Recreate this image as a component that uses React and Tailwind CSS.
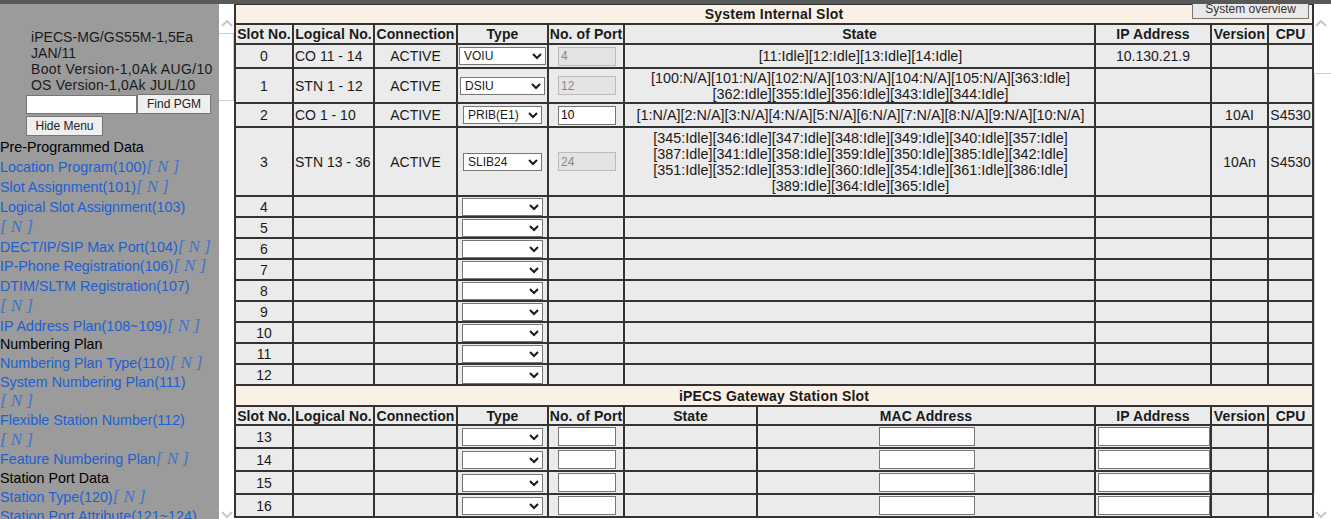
import React from 'react';

const cell = 'border-2 border-[#333] bg-[#ebebeb] p-0 text-center align-middle';
const head = 'border-2 border-[#333] bg-[#ebebeb] p-0 text-center font-bold whitespace-nowrap tracking-[0.1px]';
const titleCell = 'border-2 border-[#333] bg-[#faf0e6] p-0 text-center font-bold tracking-[0.2px]';

const menu = [
  { group: 'Pre-Programmed Data', top: true },
  { label: 'Location Program(100)', top: true },
  { label: 'Slot Assignment(101)', top: true },
  { label: 'Logical Slot Assignment(103)', top: true },
  { label: 'DECT/IP/SIP Max Port(104)', top: true },
  { label: 'IP-Phone Registration(106)', top: true },
  { label: 'DTIM/SLTM Registration(107)', top: true },
  { label: 'IP Address Plan(108~109)', top: true },
  { group: 'Numbering Plan', pull: true },
  { label: 'Numbering Plan Type(110)' },
  { label: 'System Numbering Plan(111)' },
  { label: 'Flexible Station Number(112)' },
  { label: 'Feature Numbering Plan' },
  { group: 'Station Port Data' },
  { label: 'Station Type(120)' },
  { label: 'Station Port Attribute(121~124)' },
];

const slots = [
  { no: 0, h: 'h-[24px]', logical: 'CO 11 - 14', conn: 'ACTIVE', type: 'VOIU', selW: 'w-[87px]', port: '4', off: true, state: ['[11:Idle][12:Idle][13:Idle][14:Idle]'], ip: '10.130.21.9' },
  { no: 1, h: 'h-[35px]', logical: 'STN 1 - 12', conn: 'ACTIVE', type: 'DSIU', selW: 'w-[85px]', port: '12', off: true, state: ['[100:N/A][101:N/A][102:N/A][103:N/A][104:N/A][105:N/A][363:Idle]', '[362:Idle][355:Idle][356:Idle][343:Idle][344:Idle]'] },
  { no: 2, h: 'h-[24px]', logical: 'CO 1 - 10', conn: 'ACTIVE', type: 'PRIB(E1)', selW: 'w-[79px]', port: '10', state: ['[1:N/A][2:N/A][3:N/A][4:N/A][5:N/A][6:N/A][7:N/A][8:N/A][9:N/A][10:N/A]'], version: '10AI', cpu: 'S4530' },
  { no: 3, h: 'h-[69px]', logical: 'STN 13 - 36', conn: 'ACTIVE', type: 'SLIB24', selW: 'w-[79px]', port: '24', off: true, state: ['[345:Idle][346:Idle][347:Idle][348:Idle][349:Idle][340:Idle][357:Idle]', '[387:Idle][341:Idle][358:Idle][359:Idle][350:Idle][385:Idle][342:Idle]', '[351:Idle][352:Idle][353:Idle][360:Idle][354:Idle][361:Idle][386:Idle]', '[389:Idle][364:Idle][365:Idle]'], version: '10An', cpu: 'S4530' },
];

const emptySlots = [4, 5, 6, 7, 8, 9, 10, 11, 12];
const gatewaySlots = [13, 14, 15, 16];

function TypeSelect({ value = '', width = 'w-[81px]' }) {
  return (
    <select
      defaultValue={value}
      className={`${width} h-[18px] border border-[#767676] bg-white text-[12px] align-middle appearance-auto`}
    >
      <option value="">{''}</option>
      {value && <option value={value}>{value}</option>}
    </select>
  );
}

function PortInput({ value = '', off = false }) {
  return (
    <input
      type="text"
      defaultValue={value}
      disabled={off}
      className={`ml-[2px] w-[58px] h-[19px] border px-[2px] text-[12px] align-middle ${off ? 'border-[#bbb] bg-[#e4e4e4] text-[#888]' : 'border-[#767676] bg-white text-black'}`}
    />
  );
}

function Scrollbar({ width, thumb, arrowPad = '' }) {
  return (
    <div className={`flex h-full ${width} shrink-0 flex-col bg-white`}>
      <div className={`mt-[15px] flex shrink-0 justify-center ${arrowPad}`}>
        <svg width="12" height="8" viewBox="0 0 12 8" fill="none">
          <path d="M1 7 L6 2 L11 7" stroke="#c8c8c8" strokeWidth="2" />
        </svg>
      </div>
      <div className={`${thumb} w-full shrink-0 border-[#cfcfcf]`} />
      <div className={`mt-auto flex shrink-0 justify-center ${arrowPad}`}>
        <svg width="12" height="8" viewBox="0 0 12 8" fill="none">
          <path d="M1 1 L6 6 L11 1" stroke="#c8c8c8" strokeWidth="2" />
        </svg>
      </div>
    </div>
  );
}

function SideMenu() {
  return (
    <aside className="h-full w-[219px] shrink-0 overflow-hidden bg-[#9b9b9b] text-[14px]">
      <div className="pl-[31px] pt-[25px] leading-[16px] text-[#1a1a1a]">
        <div className="w-[185px] tracking-[0.05px]">iPECS-MG/GS55M-1,5Ea JAN/11</div>
        <div className="whitespace-nowrap tracking-[0.36px]">Boot Version-1,0Ak AUG/10</div>
        <div className="whitespace-nowrap tracking-[0.22px]">OS Version-1,0Ak JUL/10</div>
      </div>
      <div className="flex items-center pl-[26px] pt-[1px]">
        <input type="text" className="h-[19px] w-[111px] border border-[#767676] bg-white" />
        <button className="h-[20px] w-[74px] border border-[#767676] bg-[#efefef] text-[12px] text-[#222]">Find PGM</button>
      </div>
      <div className="pl-[26px] pt-[1px]">
        <button className="h-[20px] w-[77px] border border-[#767676] bg-[#efefef] text-[12px] text-[#222]">Hide Menu</button>
      </div>
      <div className="w-[212px] pt-[2px] text-[14.3px]">
        {menu.map((m) =>
          m.group ? (
            <div key={m.group} className={`text-black ${m.top ? 'leading-[19.9px]' : 'leading-[19.1px]'} ${m.pull ? '-mt-[2px]' : ''}`}>{m.group}</div>
          ) : (
            <div key={m.label} className={`text-[#1b60d4] ${m.top ? 'leading-[19.9px]' : 'leading-[19.1px]'}`}>
              {m.label}
              <span className="inline-block font-['Liberation_Serif'] text-[17px] italic leading-[17px] font-light text-[#3f74cc]">[ N ]</span>
            </div>
          ),
        )}
      </div>
    </aside>
  );
}

function Cols() {
  return (
    <colgroup>
      {[58, 81, 83, 91, 76, 133, 338, 116, 57, 45].map((w, i) => (
        <col key={i} style={{ width: w }} />
      ))}
    </colgroup>
  );
}

function SlotTable() {
  return (
    <table className="w-[1080px] table-fixed border-collapse bg-[#ebebeb] text-[14px] leading-[16px] text-[#1a1a1a]">
      <Cols />
      <tbody>
        <tr className="h-[20px]">
          <td colSpan={10} className={titleCell}>System Internal Slot</td>
        </tr>
        <tr className="h-[20px]">
          <td className={head}>Slot No.</td>
          <td className={head}>Logical No.</td>
          <td className={head}>Connection</td>
          <td className={head}>Type</td>
          <td className={head}>No. of Port</td>
          <td colSpan={2} className={head}>State</td>
          <td className={head}>IP Address</td>
          <td className={head}>Version</td>
          <td className={head}>CPU</td>
        </tr>
        {slots.map((s) => (
          <tr key={s.no} className={s.h}>
            <td className={cell}>{s.no}</td>
            <td className={`${cell} text-left pl-[1px]`}>{s.logical}</td>
            <td className={cell}>{s.conn}</td>
            <td className={cell}><TypeSelect value={s.type} width={s.selW} /></td>
            <td className={cell}><PortInput value={s.port} off={s.off} /></td>
            <td colSpan={2} className={`${cell} pl-[2px] text-[14.4px]`}>
              {s.state.map((line) => <div key={line}>{line}</div>)}
            </td>
            <td className={cell}>{s.ip}</td>
            <td className={cell}>{s.version}</td>
            <td className={cell}>{s.cpu}</td>
          </tr>
        ))}
        {emptySlots.map((n) => (
          <tr key={n} className="h-[21px]">
            <td className={cell}>{n}</td>
            <td className={cell} />
            <td className={cell} />
            <td className={cell}><TypeSelect /></td>
            <td className={cell} />
            <td colSpan={2} className={cell} />
            <td className={cell} />
            <td className={cell} />
            <td className={cell} />
          </tr>
        ))}
        <tr className="h-[21px]">
          <td colSpan={10} className={titleCell}>iPECS Gateway Station Slot</td>
        </tr>
        <tr className="h-[19px]">
          <td className={head}>Slot No.</td>
          <td className={head}>Logical No.</td>
          <td className={head}>Connection</td>
          <td className={head}>Type</td>
          <td className={head}>No. of Port</td>
          <td className={head}>State</td>
          <td className={head}>MAC Address</td>
          <td className={head}>IP Address</td>
          <td className={head}>Version</td>
          <td className={head}>CPU</td>
        </tr>
        {gatewaySlots.map((n) => (
          <tr key={n} className="h-[23px]">
            <td className={cell}>{n}</td>
            <td className={cell} />
            <td className={cell} />
            <td className={cell}><TypeSelect /></td>
            <td className={cell}><PortInput /></td>
            <td className={cell} />
            <td className={cell}>
              <input type="text" className="ml-[2px] h-[19px] w-[96px] border border-[#767676] bg-white align-middle" />
            </td>
            <td className={cell}>
              <input type="text" className="ml-[2px] h-[19px] w-[112px] border border-[#767676] bg-white align-middle" />
            </td>
            <td className={cell} />
            <td className={cell} />
          </tr>
        ))}
      </tbody>
    </table>
  );
}

export default function App() {
  return (
    <div className="flex h-[519px] w-[1331px] flex-col overflow-hidden bg-white font-['Liberation_Sans',Arial,sans-serif]">
      <div className="z-10 h-[4px] shrink-0 bg-[#595959]" />
      <div className="flex min-h-0 flex-1">
        <SideMenu />
        <Scrollbar width="w-[15px]" thumb="mt-[6px] h-[68px] border-y border-r" />
        <main className="relative -mt-px h-[516px] w-[1080px] shrink-0 overflow-hidden">
          <SlotTable />
          <button className="absolute left-[958px] top-[-4px] h-[20px] w-[117px] border border-[#767676] bg-[#e9e9e9] text-[12px] leading-[14px] text-[#333]">
            System overview
          </button>
        </main>
        <Scrollbar width="w-[17px]" thumb="mt-[46px] h-[420px] border-t border-l" arrowPad="pr-[3px]" />
      </div>
    </div>
  );
}
